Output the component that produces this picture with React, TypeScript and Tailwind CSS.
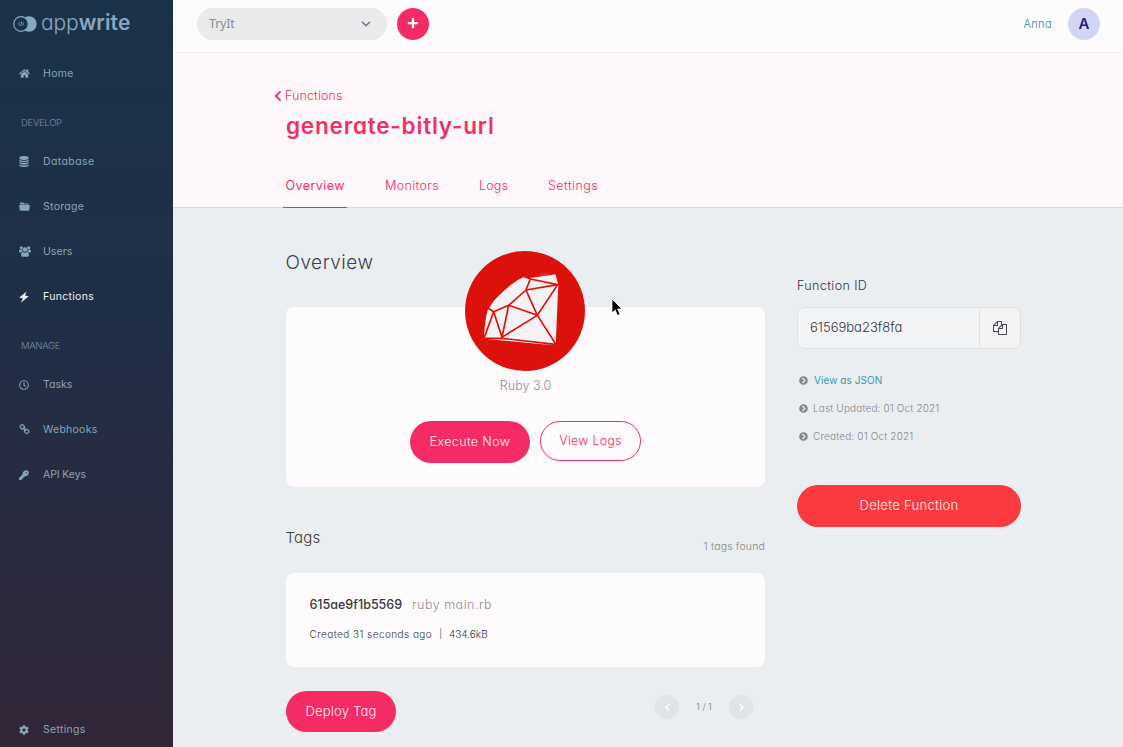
import type { ReactNode } from "react";
import { FaHome, FaRegClock, FaCog, FaChevronLeft, FaChevronRight, FaChevronCircleRight, FaPlus } from "react-icons/fa";
import { FiChevronDown } from "react-icons/fi";

function BoltIcon() {
  return (
    <svg viewBox="0 0 10 12" className="h-[12px] w-[10px]" fill="currentColor">
      <path d="M7.600 0.500 0.300 6.600 3.900 7.500 1.800 11.700 9.700 5.200 6 4.400Z" />
    </svg>
  );
}

function DatabaseIcon() {
  return (
    <svg viewBox="128 0 1536 1792" className="h-[11px] w-[10px]" fill="currentColor">
      <path d="M896 768q237 0 443-43t325-127v170q0 69-103 128t-280 93.500-385 34.500-385-34.500-280-93.500-103-128v-170q119 84 325 127t443 43zm0 768q237 0 443-43t325-127v170q0 69-103 128t-280 93.500-385 34.500-385-34.500-280-93.500-103-128v-170q119 84 325 127t443 43zm0-384q237 0 443-43t325-127v170q0 69-103 128t-280 93.500-385 34.500-385-34.500-280-93.500-103-128v-170q119 84 325 127t443 43zm0-1152q208 0 385 34.500t280 93.500 103 128v128q0 69-103 128t-280 93.500-385 34.500-385-34.500-280-93.500-103-128v-128q0-69 103-128t280-93.500 385-34.500z" />
    </svg>
  );
}

function FolderIcon() {
  return (
    <svg viewBox="0 0 22 18" className="h-[9px] w-[11px]" fill="currentColor">
      <path d="M2 4.800V2.200Q2 1 3.200 1H8.500L10.500 3H18Q19.400 3 19.600 4.800ZM.3 6.200H21.700L20.500 16Q20.300 17.500 18.800 17.500H3.200Q1.700 17.500 1.500 16Z" />
    </svg>
  );
}

function UsersIcon() {
  return (
    <svg viewBox="0 0 22 20" className="h-[11px] w-[12px]" fill="currentColor">
      <circle cx="4.200" cy="3.300" r="2.900" />
      <circle cx="17.800" cy="3.300" r="2.900" />
      <circle cx="11" cy="6.300" r="4.100" />
      <path d="M0 10.500Q0 6.300 2 6.300 4.200 7.500 6 6.700 6.200 9 7.200 10.200 4.800 10.400 3.800 12H1.500Q0 12 0 10.500ZM22 10.500Q22 6.300 20 6.300 17.800 7.500 16 6.700 15.800 9 14.800 10.200 17.200 10.400 18.200 12H20.500Q22 12 22 10.500ZM3.800 17Q3.800 10.800 7.200 10.800 11 13 14.800 10.800 18.200 10.800 18.200 17 18.200 19.800 15.500 19.800H6.500Q3.800 19.800 3.800 17Z" />
    </svg>
  );
}

function KeyIcon() {
  return (
    <svg viewBox="0 0 20 20" className="size-[10px]" fill="currentColor">
      <path fillRule="evenodd" d="M18.200 1.800C15.800-.5 12 .1 9.600 2.500 7.200 4.900 6.400 7 7.200 8.800L.5 15.500C.2 15.800.1 16.200.1 16.600V19c0 .5.4.9.9.9h3.600l1-1v-1.600h1.700l1-1v-1.700h1.700L12 12.400c1.700.4 3.700-.1 5.500-1.900 2.400-2.400 3-6.300.7-8.700ZM15.800 5.300a1.200 1.200 0 1 1-1.200-1.200 1.200 1.200 0 0 1 1.200 1.200Z" />
    </svg>
  );
}

function LinkIcon() {
  return (
    <svg viewBox="0 0 1792 1792" className="size-[11px]" fill="currentColor">
      <path d="M1520 1216q0-40-28-68l-208-208q-28-28-68-28-42 0-72 32 3 3 19 18.500t21.500 21.500 15 19 13 25.500 3.500 27.500q0 40-28 68t-68 28q-15 0-27.500-3.500t-25.500-13-19-15-21.500-21.500-18.500-19q-33 31-33 73 0 40 28 68l206 207q27 27 68 27 40 0 68-26l147-146q28-28 28-67zm-703-705q0-40-28-68l-206-207q-28-28-68-28-39 0-68 27l-147 146q-28 28-28 67 0 40 28 68l208 208q27 27 68 27 42 0 72-31-3-3-19-18.500t-21.500-21.500-15-19-13-25.500-3.500-27.500q0-40 28-68t68-28q15 0 27.500 3.500t25.500 13 19 15 21.500 21.500 18.500 19q33-31 33-73zm895 705q0 120-85 203l-147 146q-83 83-203 83-121 0-204-85l-206-207q-83-83-83-203 0-123 88-209l-88-88q-86 88-208 88-120 0-204-84l-208-208q-84-84-84-204t85-203l147-146q83-83 203-83 121 0 204 85l206 207q83 83 83 203 0 123-88 209l88 88q86-88 208-88 120 0 204 84l208 208q84 84 84 204z" />
    </svg>
  );
}

function CopyIcon() {
  return (
    <svg viewBox="0 0 1792 1792" className="size-[14px]" fill="currentColor">
      <path d="M1696 384q40 0 68 28t28 68v1216q0 40-28 68t-68 28h-960q-40 0-68-28t-28-68v-288h-544q-40 0-68-28t-28-68v-672q0-40 20-88t48-76l408-408q28-28 76-48t88-20h416q40 0 68 28t28 68v328q68-40 128-40h416zm-544 213l-299 299h299v-299zm-640-384l-299 299h299v-299zm196 647l316-316v-416h-384v416q0 40-28 68t-68 28h-416v640h512v-256q0-40 20-88t48-76zm956 804v-1152h-384v416q0 40-28 68t-68 28h-416v640h896z" />
    </svg>
  );
}

function RubyLogo() {
  return (
    <svg viewBox="30 33 360 360" className="size-[120px]">
      <circle cx="210" cy="213" r="180" fill="#dc110c" />
      <path d="M103 203Q115 181 133 165T168 134Q188 118 208 110L226 111 270 101 301 102 310 135 302 314 262 313 97 297 87 291Q90 235 99 206Z" fill="#f5f2f4" />
      <path d="M226 117 308 134 247 226 302 312M213 150 308 134M226 117 213 150 247 226M161 196 213 150M161 196 116 215M161 196 247 226 141 292 161 196M116 215 141 292M88 292 116 215 99 205M87 295H141L302 313M208 110 228 117M214 113 302 100" fill="none" stroke="#dc110c" strokeWidth="5" />
    </svg>
  );
}

function NavItem({ icon, label, active, track }: { icon: ReactNode; label: string; active?: boolean; track: string }) {
  return (
    <a className={`flex h-[45px] shrink-0 items-center pl-[19px] text-[10.500px] ${active ? "text-[#eeeef0]" : "text-[#87a5b9]"}`}>
      <span className="flex w-[24px] items-center">{icon}</span>
      <span className={track}>{label}</span>
    </a>
  );
}

function NavHeading({ children }: { children: ReactNode }) {
  return <div className="h-[43px] shrink-0 pt-[17px] pl-[21px] text-[9.500px] leading-[20px] font-light tracking-[-0.3px] text-[#7b8fa0]">{children}</div>;
}

function Sidebar() {
  return (
    <aside className="flex w-[173px] shrink-0 flex-col bg-linear-to-b from-[#1a3249] via-[#202e47] via-45% to-[#312637]">
      <div className="flex h-[51px] shrink-0 items-center gap-[4px] pb-[6px] pl-[13px] text-[#87a9c0]">
        <svg viewBox="0 0 24 16" className="mt-[3px] h-[16px] w-[24px]">
          <circle cx="16" cy="8" r="7.700" fill="currentColor" />
          <circle cx="8" cy="8" r="7.300" fill="#1a3249" stroke="currentColor" strokeWidth="1.200" />
          <path d="M7 6 5.500 7.800 7 9.500M8.700 5.500 8 10M9.500 6.500 11 8 9.500 9.500" fill="none" stroke="currentColor" strokeWidth=".8" />
        </svg>
        <span className="text-[21px] leading-[28px] font-light tracking-[-0.1px]">app<b className="font-semibold tracking-[0.1px]">write</b></span>
      </div>
      <NavItem icon={<FaHome size={11} />} label="Home" track="tracking-[0.35px]" />
      <NavHeading>DEVELOP</NavHeading>
      <NavItem icon={<DatabaseIcon />} label="Database" track="tracking-[0.4px]" />
      <NavItem icon={<FolderIcon />} label="Storage" track="tracking-[0.3px]" />
      <NavItem icon={<UsersIcon />} label="Users" track="tracking-[0.05px]" />
      <NavItem icon={<BoltIcon />} label="Functions" active track="tracking-[0.3px]" />
      <NavHeading>MANAGE</NavHeading>
      <NavItem icon={<FaRegClock size={10} />} label="Tasks" track="tracking-[0px]" />
      <NavItem icon={<LinkIcon />} label="Webhooks" track="tracking-[0.25px]" />
      <NavItem icon={<KeyIcon />} label="API Keys" track="tracking-[-0.1px]" />
      <div className="mt-auto -mb-[5px]">
        <NavItem icon={<FaCog size={10} />} label="Settings" track="tracking-[0.3px]" />
      </div>
    </aside>
  );
}

function TopBar() {
  return (
    <div className="flex h-[53px] shrink-0 items-start border-b border-[#f6eef0] bg-[#fefbfc] pt-[8px] pr-[23px] pl-[24px]">
      <div className="flex h-[32px] w-[190px] items-center justify-between rounded-full bg-[#e9eaec] pr-[14px] pl-[12px] font-['Noto_Sans',sans-serif] text-[12.500px] text-[#8b8a90]">
        <span className="tracking-[-0.2px]">TryIt</span>
        <FiChevronDown size={14} strokeWidth={2.8} className="text-[#77777d]" />
      </div>
      <button className="ml-[10px] flex size-[32px] items-center justify-center rounded-full bg-[#f52b66] pb-[2px] text-white"><FaPlus size={12} /></button>
      <span className="ml-auto text-[11px] leading-[32px] font-light tracking-[0.4px] text-[#288ca2]">Anna</span>
      <span className="ml-[16px] flex size-[32px] items-center justify-center rounded-full bg-[#d2d6f4] text-[15px] font-semibold text-[#20207a]">A</span>
    </div>
  );
}

function Header() {
  return (
    <header className="flex h-[155px] shrink-0 flex-col border-b border-[#d8dce1] bg-[#fff8fa] pl-[101px] text-[#f12f68]">
      <div className="mt-[33px] flex h-[20px] items-center gap-[3px] text-[12.500px] font-light"><FaChevronLeft size={12} className="w-[8px]" /><span className="tracking-[0.12px]">Functions</span></div>
      <h1 className="mt-[2px] ml-[12px] text-[22.500px] leading-[36px] font-semibold tracking-[0.8px]">generate-bitly-url</h1>
      <nav className="mt-auto ml-[9px] flex h-[43px] text-[12.500px] leading-[43px] font-light">
        <span className="-mb-px w-[64px] border-b border-[#f12f68] pl-[2.500px] font-normal tracking-[0.45px]">Overview</span>
        <span className="ml-[38px] w-[94px] tracking-[0.4px]">Monitors</span>
        <span className="w-[69px] tracking-[0.2px]">Logs</span>
        <span className="tracking-[0.45px]">Settings</span>
      </nav>
    </header>
  );
}

function Details() {
  return (
    <div className="w-[224px] pt-[68px]">
      <div className="h-[31px] text-[12.500px] leading-[20px] font-light tracking-[0.4px] text-[#34343f]">Function ID</div>
      <div className="flex h-[42px] rounded-[8px] border border-[#dfe0e4] bg-[#f3f4f6] text-[#45454f]">
        <span className="flex-1 pl-[12px] text-[13px] leading-[39px] font-light text-[#34343f]">61569ba23f8fa</span>
        <span className="flex w-[41px] items-center justify-center rounded-r-[7px] border-l border-[#dfe0e4] bg-[#f6f3f5]"><CopyIcon /></span>
      </div>
      <ul className="mt-[17px] pl-[2px] text-[10px] font-light text-[#85858a]">
        <li className="flex h-[28px] items-center"><FaChevronCircleRight size={9} /><span className="ml-[6px] font-normal tracking-[0.07px] text-[#3897ae]">View as JSON</span></li>
        <li className="flex h-[28px] items-center"><FaChevronCircleRight size={9} /><span className="ml-[5px] tracking-[0.15px]">Last Updated: 01 Oct 2021</span></li>
        <li className="flex h-[28px] items-center"><FaChevronCircleRight size={9} /><span className="ml-[5px] tracking-[0.16px]">Created: 01 Oct 2021</span></li>
      </ul>
      <button className="mt-[35px] h-[42px] w-full rounded-full bg-[#fb3a40] text-[13px] font-light tracking-[0.3px] text-[#fff0f1]">Delete Function</button>
    </div>
  );
}

export default function App() {
  return (
    <div className="relative flex h-[747px] w-[1123px] overflow-hidden bg-[#eaeef1] font-['Inter',sans-serif] [font-feature-settings:'cv11']">
      <Sidebar />
      <main className="flex flex-1 flex-col">
        <TopBar />
        <Header />
        <div className="flex gap-[32px] pl-[113px]">
          <div className="w-[479px]">
            <h2 className="-ml-[0.500px] h-[99px] pt-[40px] text-[19px] leading-[30px] font-light tracking-[0.5px] text-[#3c3c46]">Overview</h2>
            <section className="flex h-[180px] flex-col items-center rounded-[8px] bg-[#fefbfc]">
              <div className="-mt-[56px] -ml-px rounded-full"><RubyLogo /></div>
              <div className="mt-[5px] text-[12.500px] leading-[20px] font-light text-[#8d8d91]">Ruby 3.0</div>
              <div className="mt-[25px] flex items-start gap-[10px] text-[12.500px] font-light">
                <button className="h-[42px] w-[120px] rounded-full bg-[#f52b66] tracking-[0.35px] text-[#fff0f4]">Execute Now</button>
                <button className="h-[40px] w-[101px] rounded-full border border-[#f12f68] pt-[1px] tracking-[0.2px] text-[#f12f68]">View Logs</button>
              </div>
            </section>
            <div className="mt-[38px] flex h-[48px] justify-between">
              <h3 className="-ml-[0.500px] text-[15px] leading-[26px] font-light tracking-[0.2px] text-[#3c3c46]">Tags</h3>
              <span className="pt-[12px] text-[10.500px] leading-[20px] font-light tracking-[0.17px] text-[#85858a]">1 tags found</span>
            </div>
            <section className="h-[94px] rounded-[8px] bg-[#fefbfc] pt-[22px] pl-[23.500px]">
              <div className="flex gap-[10px] text-[12.500px] leading-[20px]"><b className="font-medium text-[#383842]">615ae9f1b5569</b><span className="tracking-[0.5px] font-light text-[#8d8d91]">ruby main.rb</span></div>
              <div className="mt-[9px] flex text-[10px] leading-[20px] font-light text-[#353540]"><span className="tracking-[0.43px]">Created 31 seconds ago</span><span className="mx-[7px] text-[9px]">|</span><span>434.6kB</span></div>
            </section>
            <div className="mt-[24px] flex items-start justify-between pr-[12px]">
              <button className="h-[41px] w-[110px] rounded-full bg-[#f52b66] text-[13px] font-light tracking-[0.2px] text-[#fff0f4]">Deploy Tag</button>
              <div className="mt-[4px] flex items-center text-[9px] font-light text-[#77777d]">
                <span className="flex size-[24px] items-center justify-center rounded-full bg-[#e1e4e7] text-white"><FaChevronLeft size={9} /></span>
                <span className="w-[50px] text-center">1 / 1</span>
                <span className="flex size-[24px] items-center justify-center rounded-full bg-[#e1e4e7] text-white"><FaChevronRight size={9} /></span>
              </div>
            </div>
          </div>
          <Details />
        </div>
      </main>
      <svg viewBox="0 0 12 19" className="absolute top-[298px] left-[611px] h-[19px] w-[12px]">
        <path d="M1 1V15L4.200 12 6.500 17.500 9 16.400 6.700 11H11Z" fill="#000" stroke="#fff" strokeWidth=".8" />
      </svg>
    </div>
  );
}
